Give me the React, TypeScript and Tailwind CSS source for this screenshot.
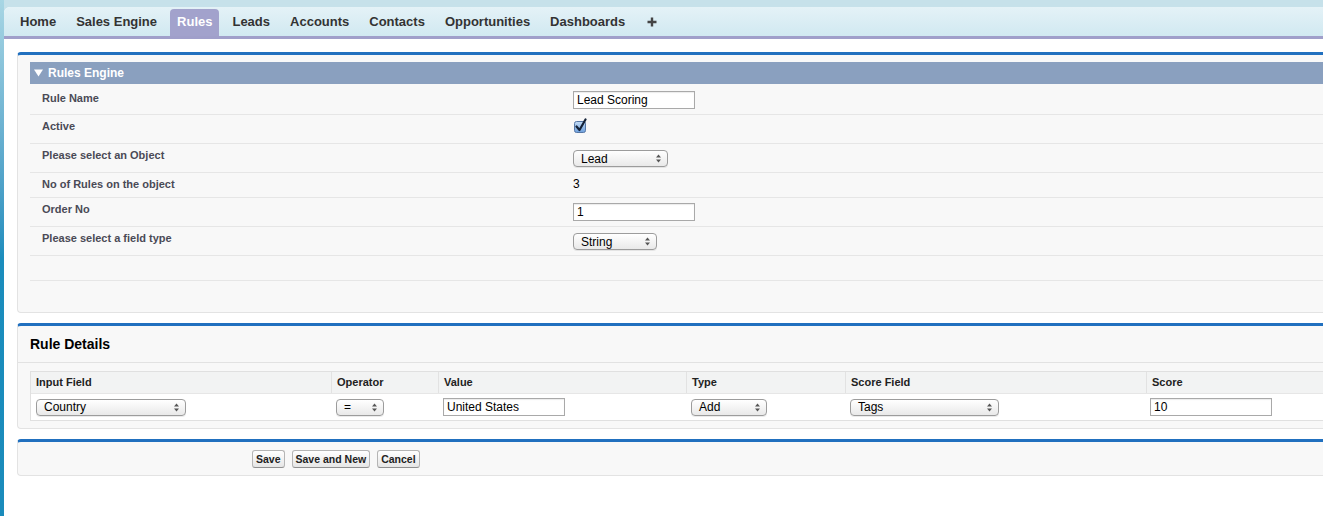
import React from "react";

const tabs = ["Home", "Sales Engine", "Rules", "Leads", "Accounts", "Contacts", "Opportunities", "Dashboards"];

function Select({ value, width }: { value: string; width: number }) {
  return (
    <div
      className="flex h-[17px] items-center justify-between rounded-[4px] border border-[#9c9c9c] bg-gradient-to-b from-white to-[#e9e9e9] pl-[7px] pr-[6px] text-[12px] leading-none text-black shadow-[0_1px_0_rgba(0,0,0,0.08)]"
      style={{ width }}
    >
      <span>{value}</span>
      <svg width="5" height="9" viewBox="0 0 5 9">
        <path d="M2.5 0.5 L5 3.5 L0 3.5 Z" fill="#555" />
        <path d="M2.5 8.5 L5 5.5 L0 5.5 Z" fill="#555" />
      </svg>
    </div>
  );
}

function TextInput({ value, width }: { value: string; width: number }) {
  return (
    <div
      className="flex h-[18px] items-center border border-[#a9a9a9] bg-white pl-[3px] text-[12px] leading-none text-black shadow-[inset_0_1px_1px_rgba(0,0,0,0.08)]"
      style={{ width }}
    >
      {value}
    </div>
  );
}

function Checkbox() {
  return (
    <svg width="16" height="16" viewBox="0 0 16 16">
      <defs>
        <linearGradient id="cb" x1="0" y1="0" x2="0" y2="1">
          <stop offset="0" stopColor="#c4dcf6" />
          <stop offset="1" stopColor="#6d9fdc" />
        </linearGradient>
      </defs>
      <rect x="1.5" y="3.5" width="11" height="11" rx="2" fill="url(#cb)" stroke="#5677a6" />
      <path d="M3.5 8.5 L6.5 12 L12.5 1.5" fill="none" stroke="#142238" strokeWidth="2.2" strokeLinecap="round" strokeLinejoin="round" />
    </svg>
  );
}

function Row({
  label,
  h,
  lpt,
  vpt,
  children,
}: {
  label: string;
  h: number;
  lpt: number;
  vpt: number;
  children?: React.ReactNode;
}) {
  return (
    <div className="grid grid-cols-[543px_1fr] border-b border-[#e6e6e6]" style={{ height: h }}>
      <div className="pl-[12px] text-[11px] font-bold leading-[13px] text-[#4a4a56]" style={{ paddingTop: lpt }}>
        {label}
      </div>
      <div className="flex items-start" style={{ paddingTop: vpt }}>
        {children}
      </div>
    </div>
  );
}

function Button({ children }: { children: React.ReactNode }) {
  return (
    <button className="flex h-[18px] items-center rounded-[3px] border border-[#b5b5b5] border-b-[#8f8f8f] bg-gradient-to-b from-white to-[#e6e6e6] px-[3px] text-[10.5px] font-bold leading-none text-[#222]">
      {children}
    </button>
  );
}

const cols = [
  { name: "Input Field", w: 300 },
  { name: "Operator", w: 107 },
  { name: "Value", w: 248 },
  { name: "Type", w: 159 },
  { name: "Score Field", w: 301 },
  { name: "Score", w: 200 },
];

export default function App() {
  return (
    <div className="flex h-[516px] w-full overflow-hidden bg-[#c6e1ea] font-['Liberation_Sans',Arial,sans-serif]">
      <div className="w-[4px] shrink-0 bg-gradient-to-b from-[#a8d6e4] via-[#1b8dbd] to-[#1a8bbb]" />
      <div className="flex min-w-0 flex-1 flex-col pt-[7px]">
        <div className="flex flex-1 flex-col overflow-hidden rounded-tl-[6px] bg-white">
          {/* tab bar */}
          <div className="flex h-[32px] shrink-0 items-end border-b-[3px] border-[#a09fca] bg-gradient-to-b from-[#e4f2f7] to-[#d1e9f1] pl-[6px]">
            {tabs.map((t) => (
              <div
                key={t}
                className={`mx-[3px] flex h-[27px] items-center rounded-t-[4px] px-[7px] pb-[2px] text-[13px] font-bold ${
                  t === "Rules" ? "bg-[#a2a2cc] text-white" : "text-[#333]"
                }`}
              >
                {t}
              </div>
            ))}
            <div className="ml-[12px] flex h-[27px] items-center pb-[2px]">
              <svg width="10" height="10" viewBox="0 0 10 10">
                <path d="M5 0.5 V9.5 M0.5 5 H9.5" stroke="#444" strokeWidth="2.4" />
              </svg>
            </div>
          </div>

          {/* content */}
          <div className="flex flex-col gap-[10px] pl-[13px] pt-[13px]">
            {/* Rules Engine panel */}
            <div className="rounded-l-[4px] border-b border-l border-t-[3px] border-[#e3e3e3] border-t-[#2170bf] bg-[#f8f8f8] pb-[31px] pl-[12px] pt-[7px]">
              <div className="flex h-[22px] items-center gap-[5px] bg-[#8aa0bf] pl-[4px] text-[12px] font-bold text-white">
                <svg width="9" height="8" viewBox="0 0 9 8">
                  <path d="M0 0.5 H9 L4.5 7.5 Z" fill="#fff" />
                </svg>
                Rules Engine
              </div>
              <Row label="Rule Name" h={31} lpt={8} vpt={7}>
                <TextInput value="Lead Scoring" width={122} />
              </Row>
              <Row label="Active" h={29} lpt={5} vpt={3}>
                <Checkbox />
              </Row>
              <Row label="Please select an Object" h={29} lpt={5} vpt={6}>
                <Select value="Lead" width={95} />
              </Row>
              <Row label="No of Rules on the object" h={25} lpt={5} vpt={5}>
                <span className="text-[12px] leading-[13px] text-black">3</span>
              </Row>
              <Row label="Order No" h={29} lpt={5} vpt={5}>
                <TextInput value="1" width={122} />
              </Row>
              <Row label="Please select a field type" h={29} lpt={5} vpt={6}>
                <Select value="String" width={84} />
              </Row>
              <Row label="" h={25} lpt={5} vpt={5} />
            </div>

            {/* Rule Details panel */}
            <div className="rounded-l-[4px] border-b border-l border-t-[3px] border-[#e3e3e3] border-t-[#2170bf] bg-[#f8f8f8] pb-[7px]">
              <div className="flex h-[37px] items-center border-b border-[#e2e2e2] pl-[12px] text-[14px] font-bold text-black">
                Rule Details
              </div>
              <div className="ml-[12px] mt-[8px] border-b border-l border-t border-[#e0e0e0]">
                <div className="flex h-[22px] border-b border-[#e6e6e6] bg-[#f2f3f3]">
                  {cols.map((c, i) => (
                    <div
                      key={c.name}
                      className={`flex shrink-0 items-center pl-[5px] text-[11px] font-bold text-[#222] ${
                        i > 0 ? "border-l border-[#e2e2e2]" : ""
                      }`}
                      style={{ width: c.w }}
                    >
                      {c.name}
                    </div>
                  ))}
                </div>
                <div className="flex h-[26px] items-center bg-white">
                  <div className="shrink-0 pl-[5px]" style={{ width: 300 }}>
                    <Select value="Country" width={150} />
                  </div>
                  <div className="shrink-0 pl-[5px]" style={{ width: 107 }}>
                    <Select value="=" width={48} />
                  </div>
                  <div className="shrink-0 pl-[5px]" style={{ width: 248 }}>
                    <TextInput value="United States" width={122} />
                  </div>
                  <div className="shrink-0 pl-[5px]" style={{ width: 159 }}>
                    <Select value="Add" width={76} />
                  </div>
                  <div className="shrink-0 pl-[5px]" style={{ width: 301 }}>
                    <Select value="Tags" width={149} />
                  </div>
                  <div className="shrink-0 pl-[4px]" style={{ width: 200 }}>
                    <TextInput value="10" width={122} />
                  </div>
                </div>
              </div>
            </div>

            {/* buttons panel */}
            <div className="flex h-[37px] items-center gap-[7px] rounded-l-[4px] border-b border-l border-t-[3px] border-[#e3e3e3] border-t-[#2170bf] bg-[#f8f8f8] pl-[234px] pt-[1px]">
              <Button>Save</Button>
              <Button>Save and New</Button>
              <Button>Cancel</Button>
            </div>
          </div>
        </div>
      </div>
    </div>
  );
}
